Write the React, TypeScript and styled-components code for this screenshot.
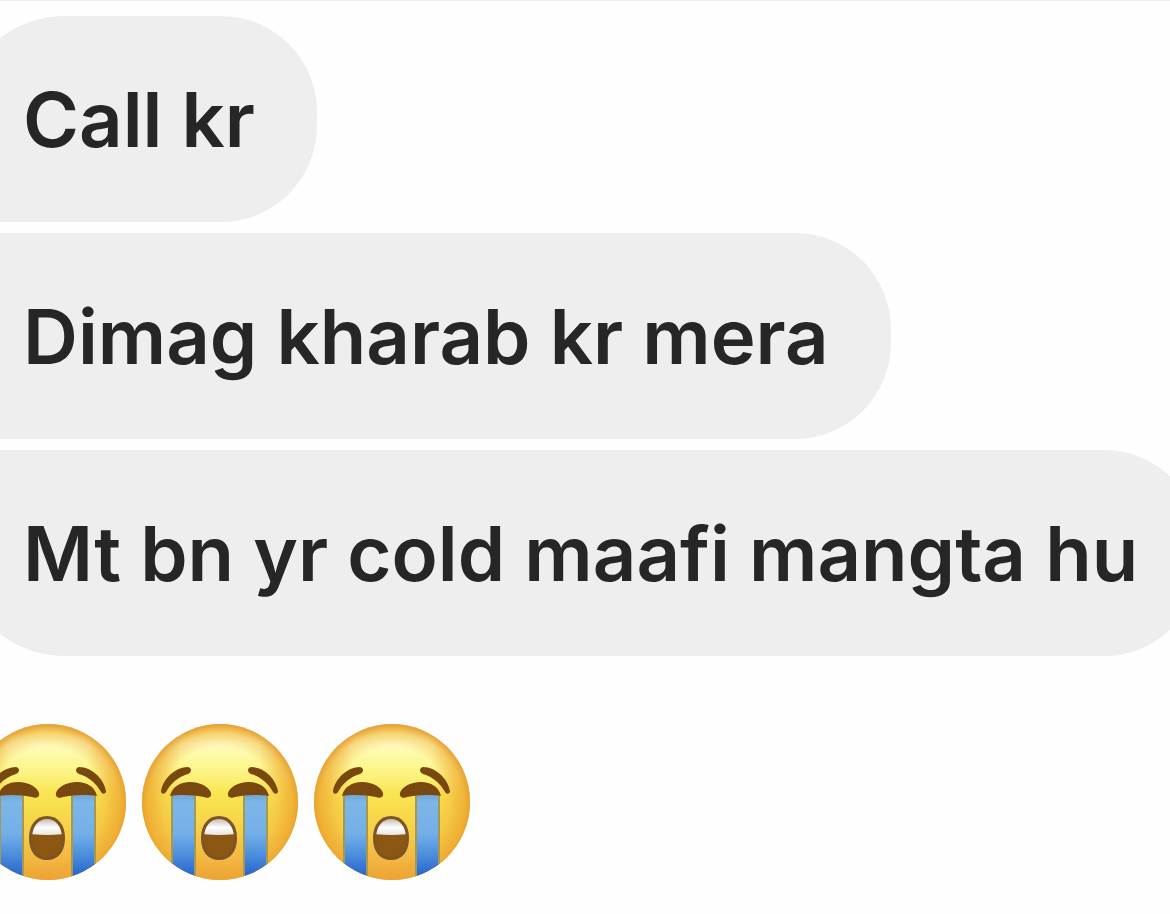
import React from "react";
import styled, { createGlobalStyle } from "styled-components";

const GlobalStyle = createGlobalStyle`
  body {
    margin: 0;
    background: #fefefe;
    overflow-x: hidden;
  }
`;

const Thread = styled.main`
  box-sizing: border-box;
  min-height: 100vh;
  overflow: hidden;
  padding-top: 15px;
  border-top: 1px solid #efefef;
  font-family: Inter, "Liberation Sans", sans-serif;
`;

const MessageList = styled.ul`
  display: flex;
  flex-direction: column;
  align-items: flex-start;
  gap: 11px;
  margin: 0 0 0 -39px;
  padding: 0;
  list-style: none;
`;

type Place = "first" | "middle" | "last";

const corners: Record<Place, string> = {
  first: "103px 96px 96px 24px",
  middle: "24px 96px 96px 24px",
  last: "24px 96px 96px 103px",
};

const Bubble = styled.li<{ $place: Place }>`
  padding: 55px 62px;
  border-radius: ${({ $place }) => corners[$place]};
  background: #eeeeee;
  color: #262626;
  font-size: 76px;
  font-weight: 600;
  line-height: 96px;
  white-space: nowrap;
`;

const Reactions = styled.div`
  display: flex;
  gap: 16px;
  margin: 68px 0 0 -30px;
`;

const Face = styled.svg`
  flex: none;
  width: 156px;
  height: 156px;
`;

function CryingFace({ id }: { id: string }) {
  return (
    <Face viewBox="0 0 156 156" role="img" aria-label="Loudly crying face">
      <defs>
        <linearGradient id={`${id}-skin`} x1="0" y1="0" x2="0" y2="1">
          <stop offset="0" stopColor="#fcec80" />
          <stop offset="0.12" stopColor="#fefbc0" />
          <stop offset="0.28" stopColor="#fdf68e" />
          <stop offset="0.45" stopColor="#f9e550" />
          <stop offset="0.7" stopColor="#f6cd47" />
          <stop offset="1" stopColor="#efa53c" />
        </linearGradient>
        <radialGradient id={`${id}-rim`} cx="0.5" cy="0.52" r="0.53">
          <stop offset="0.7" stopColor="#f0a030" stopOpacity="0" />
          <stop offset="0.87" stopColor="#eda628" stopOpacity="0.4" />
          <stop offset="0.97" stopColor="#e3952a" stopOpacity="0.85" />
          <stop offset="1" stopColor="#de8a34" stopOpacity="0.9" />
        </radialGradient>
        <linearGradient id={`${id}-side`} x1="0" y1="0" x2="1" y2="0">
          <stop offset="0" stopColor="#eb9c30" stopOpacity="0.6" />
          <stop offset="0.25" stopColor="#f0a838" stopOpacity="0" />
          <stop offset="0.75" stopColor="#f0a838" stopOpacity="0" />
          <stop offset="1" stopColor="#eb9c30" stopOpacity="0.6" />
        </linearGradient>
        <linearGradient id={`${id}-tear`} x1="0" y1="0" x2="0" y2="1">
          <stop offset="0" stopColor="#6fa8d6" />
          <stop offset="0.1" stopColor="#7db6e8" />
          <stop offset="0.45" stopColor="#74afe8" />
          <stop offset="0.7" stopColor="#4a8cdc" />
          <stop offset="0.95" stopColor="#2460cc" />
        </linearGradient>
        <linearGradient id={`${id}-teeth`} x1="0" y1="0" x2="0" y2="1">
          <stop offset="0" stopColor="#bdb3aa" />
          <stop offset="0.55" stopColor="#ffffff" />
          <stop offset="1" stopColor="#e8e2dc" />
        </linearGradient>
        <clipPath id={`${id}-head`}>
          <circle cx="78" cy="78" r="78" />
        </clipPath>
        <clipPath id={`${id}-mouth`}>
          <path d="M77 95C69 95 62 102 62 114C62 126 68 133 77 133C86 133 92 126 92 114C92 102 85 95 77 95Z" />
        </clipPath>
      </defs>
      <circle cx="78" cy="78" r="78" fill={`url(#${id}-skin)`} />
      <circle cx="78" cy="78" r="78" fill={`url(#${id}-side)`} />
      <circle cx="78" cy="78" r="78" fill={`url(#${id}-rim)`} />
      <g clipPath={`url(#${id}-head)`} stroke="#9f9a55" strokeWidth="2">
        <path d="M30 70H53V158H30Z" fill={`url(#${id}-tear)`} />
        <path d="M102 70H125V158H102Z" fill={`url(#${id}-tear)`} />
      </g>
      <g fill="#79480f">
        <path d="M19 67C21 55 33 43 46 43C50 44 50 48 46 50C36 53 29 59 24 68C22 71 19 70 19 67Z" />
        <path d="M136 67C134 55 122 43 109 43C105 44 105 48 109 50C119 53 126 59 131 68C133 71 136 70 136 67Z" />
        <path d="M28 72C30 63 38 58 48 58C59 58 67 63 69 69C70 73 66 75 62 73C53 71 39 70 28 72Z" />
        <path d="M127 72C125 63 117 58 107 58C96 58 88 63 86 69C85 73 89 75 93 73C102 71 116 70 127 72Z" />
      </g>
      <path
        d="M77 92C66 92 59 101 59 114C59 128 66 136 77 136C88 136 95 128 95 114C95 101 88 92 77 92Z"
        fill="#7d5424"
      />
      <g clipPath={`url(#${id}-mouth)`}>
        <path d="M60 110H94V136H60Z" fill="#8b5712" />
        <path d="M60 94H94V110Q77 112 60 110Z" fill={`url(#${id}-teeth)`} />
      </g>
    </Face>
  );
}

const messages: { text: string; place: Place }[] = [
  { text: "Call kr", place: "first" },
  { text: "Dimag kharab kr mera", place: "middle" },
  { text: "Mt bn yr cold maafi mangta hu", place: "last" },
];

export default function App() {
  return (
    <>
      <GlobalStyle />
      <Thread>
        <MessageList>
          {messages.map(({ text, place }) => (
            <Bubble key={text} $place={place}>
              {text}
            </Bubble>
          ))}
        </MessageList>
        <Reactions>
          {["one", "two", "three"].map((id) => (
            <CryingFace key={id} id={id} />
          ))}
        </Reactions>
      </Thread>
    </>
  );
}
